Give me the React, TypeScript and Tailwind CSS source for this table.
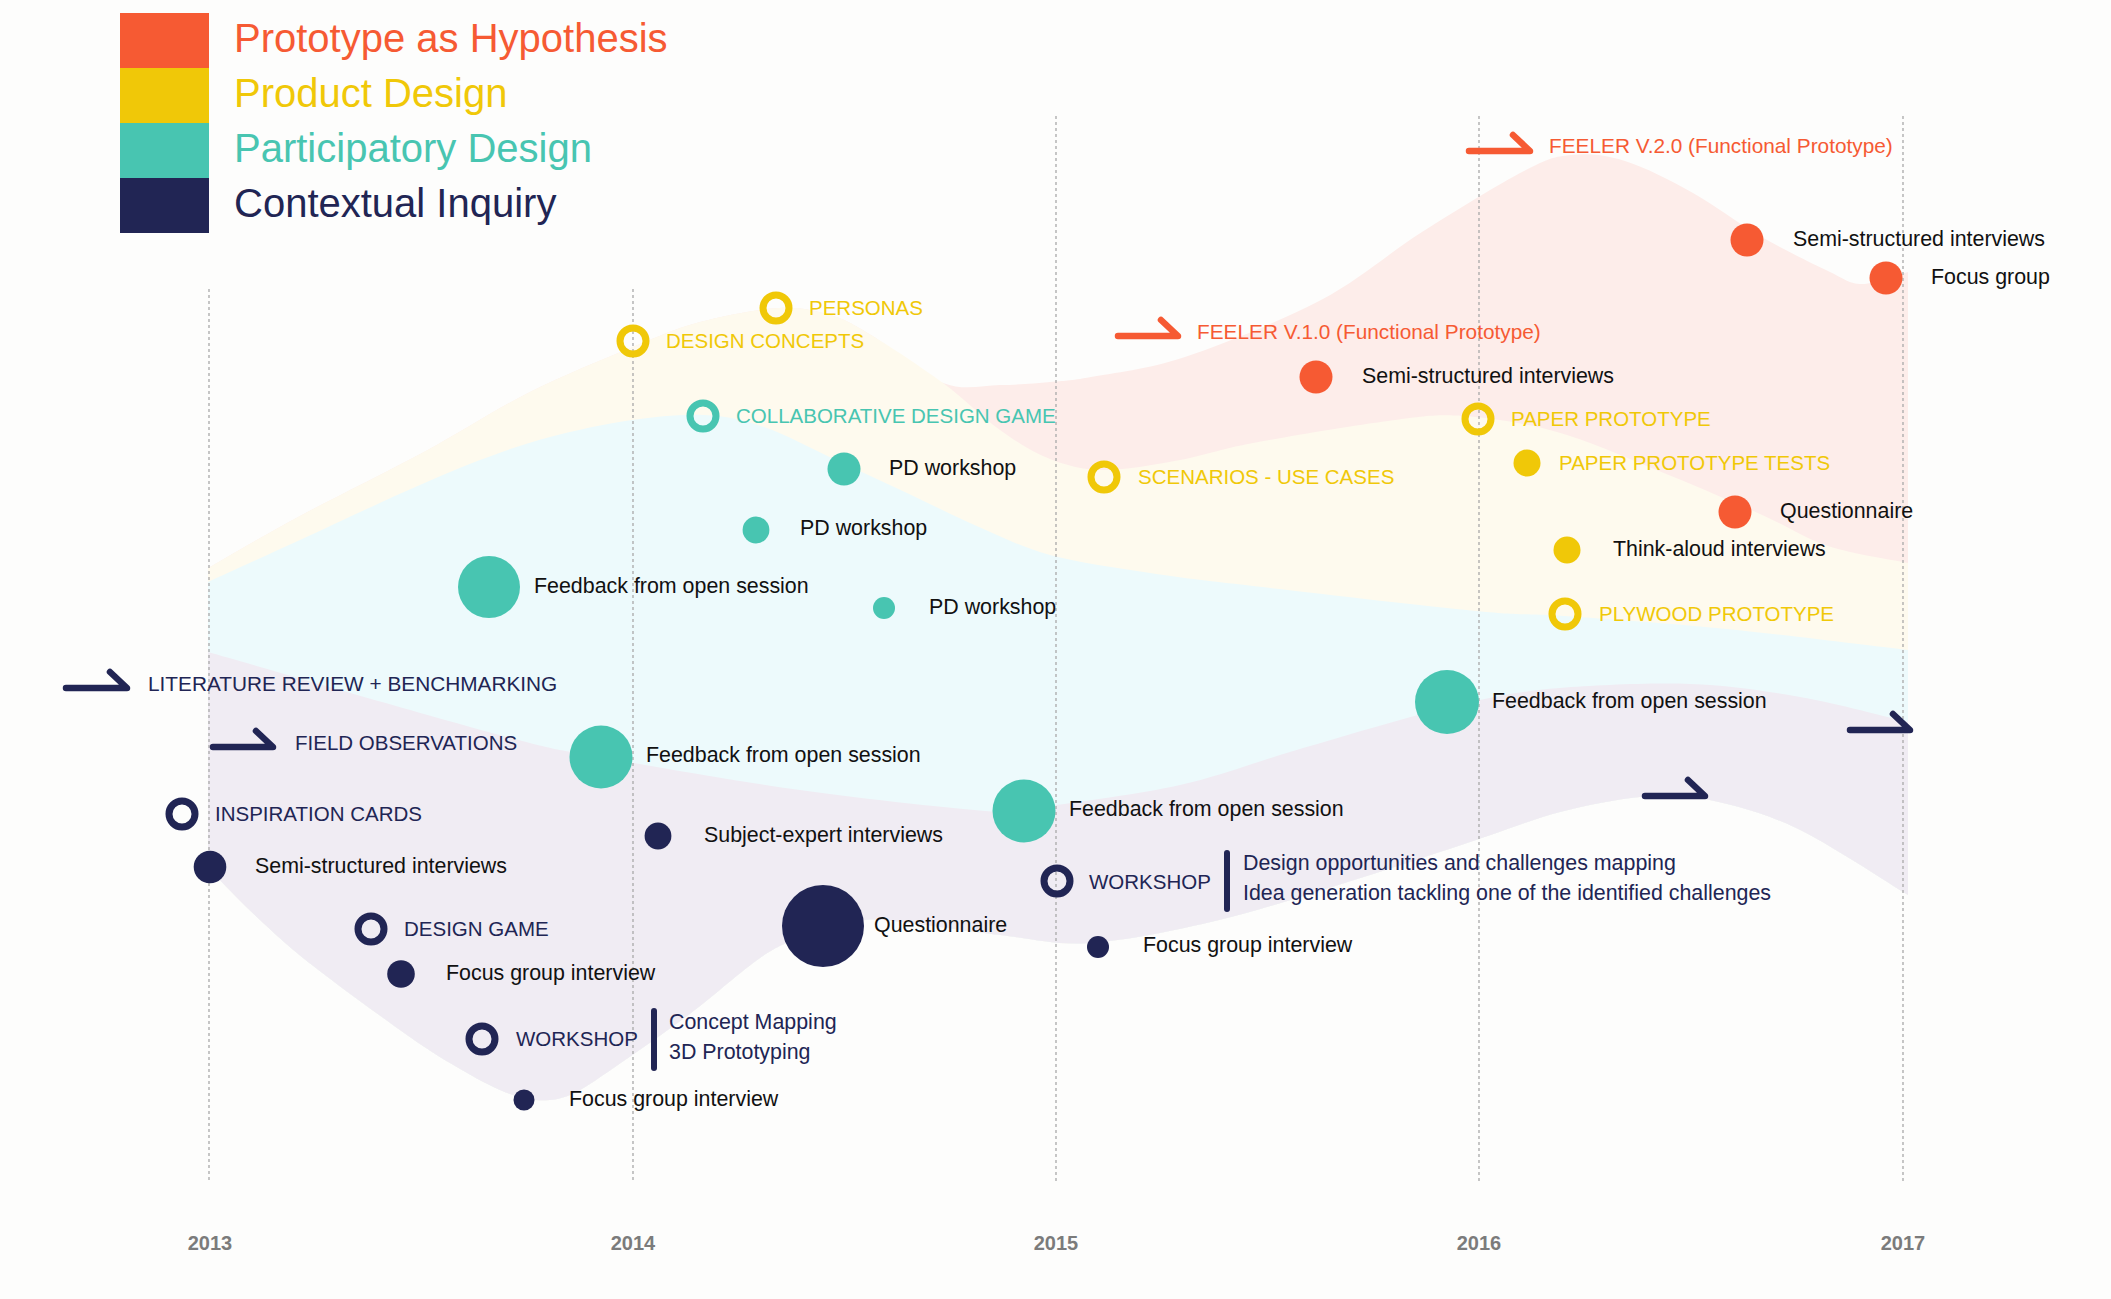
import React from "react";

const RED = "#f65a33";
const YELLOW = "#f0c808";
const TEAL = "#48c5b1";
const NAVY = "#212554";

type Pt = [number, number];

// catmull-rom -> cubic bezier, starting from the current point pts[0]
const smooth = (pts: Pt[]) => {
  let d = "";
  for (let i = 0; i < pts.length - 1; i++) {
    const p0 = pts[i - 1] || pts[i];
    const p1 = pts[i];
    const p2 = pts[i + 1];
    const p3 = pts[i + 2] || p2;
    const c1x = p1[0] + (p2[0] - p0[0]) / 6;
    const c1y = p1[1] + (p2[1] - p0[1]) / 6;
    const c2x = p2[0] - (p3[0] - p1[0]) / 6;
    const c2y = p2[1] - (p3[1] - p1[1]) / 6;
    d += ` C ${c1x} ${c1y} ${c2x} ${c2y} ${p2[0]} ${p2[1]}`;
  }
  return d;
};

const area = (top: Pt[], bottom: Pt[]) => {
  const rev = [...bottom].reverse();
  return `M ${top[0][0]} ${top[0][1]}${smooth(top)} L ${rev[0][0]} ${rev[0][1]}${smooth(rev)} Z`;
};

const yellowLeft: Pt[] = [
  [208, 568], [300, 516], [424, 452], [530, 392], [633, 347], [700, 322],
  [779, 308], [830, 315], [871, 335], [943, 383],
];
const redBottom: Pt[] = [
  [943, 383], [1000, 430], [1050, 459], [1104, 470], [1180, 460], [1253, 443],
  [1388, 421], [1463, 416], [1557, 432], [1659, 471], [1760, 514], [1828, 546], [1908, 563],
];
const redTop: Pt[] = [
  [943, 383], [1000, 385], [1050, 382], [1091, 377], [1185, 357], [1321, 300],
  [1422, 232], [1524, 171], [1571, 155], [1625, 161], [1693, 193], [1760, 236],
  [1828, 271], [1862, 284], [1908, 272],
];
const tealTop: Pt[] = [
  [208, 582], [300, 540], [404, 492], [480, 460], [550, 437], [632, 420], [704, 415],
  [764, 427], [836, 460], [907, 493], [979, 527], [1050, 555], [1150, 573],
  [1253, 586], [1476, 611], [1564, 616], [1727, 629], [1908, 650],
];
const navyTop: Pt[] = [
  [208, 652], [500, 735], [601, 757], [800, 790], [1000, 812], [1050, 806],
  [1180, 785], [1290, 752], [1400, 720], [1480, 700], [1560, 688], [1690, 684],
  [1800, 697], [1908, 722],
];
const navyBottom: Pt[] = [
  [208, 868], [260, 920], [312, 965], [400, 1030], [450, 1063], [500, 1090],
  [535, 1100], [570, 1095], [615, 1067], [691, 1013], [760, 958], [800, 938],
  [850, 925], [883, 920], [1000, 935], [1090, 943], [1219, 920], [1354, 880],
  [1476, 840], [1560, 812], [1640, 797], [1700, 798], [1794, 827], [1908, 895],
];

const dots: [number, number, number, string][] = [
  [1316, 377, 16.5, RED], [1747, 240, 16.5, RED], [1886, 278, 16.5, RED], [1735, 512, 16.5, RED],
  [1527, 463, 13.5, YELLOW], [1567, 550, 13.5, YELLOW],
  [844, 469, 16.5, TEAL], [756, 530, 13.4, TEAL], [884, 608, 11, TEAL],
  [489, 587, 31, TEAL], [601, 757, 31.5, TEAL], [1024, 811, 31.5, TEAL], [1447, 702, 32, TEAL],
  [210, 867, 16.3, NAVY], [401, 974, 13.8, NAVY], [524, 1100, 10.5, NAVY],
  [658, 836, 13.4, NAVY], [823, 926, 41, NAVY], [1098, 947, 11, NAVY],
];

const rings: [number, number, string][] = [
  [776, 308, YELLOW], [633, 341, YELLOW], [1104, 477, YELLOW], [1478, 419, YELLOW], [1565, 614, YELLOW],
  [703, 416, TEAL],
  [182, 814, NAVY], [371, 929, NAVY], [482, 1039, NAVY], [1057, 881, NAVY],
];

const arrows: [number, number, number, string][] = [
  [1469, 1530, 151, RED],
  [1118, 1178, 336, RED],
  [66, 127, 688, NAVY],
  [213, 273, 747, NAVY],
  [1645, 1705, 796, NAVY],
  [1850, 1910, 730, NAVY],
];

// caps = stage labels (slightly smaller), rest = activity labels
const labels: [string, string][] = [
  ["FEELER V.2.0 (Functional Prototype)", "left-[1549px] top-[146px] text-[#f65a33] text-[20.8px]"],
  ["FEELER V.1.0 (Functional Prototype)", "left-[1197px] top-[332px] text-[#f65a33] text-[20.8px]"],
  ["Semi-structured interviews", "left-[1793px] top-[240px] text-[#111111] text-[21.4px]"],
  ["Focus group", "left-[1931px] top-[278px] text-[#111111] text-[21.4px]"],
  ["Semi-structured interviews", "left-[1362px] top-[377px] text-[#111111] text-[21.4px]"],
  ["Questionnaire", "left-[1780px] top-[512px] text-[#111111] text-[21.4px]"],
  ["Think-aloud interviews", "left-[1613px] top-[550px] text-[#111111] text-[21.4px]"],
  ["PD workshop", "left-[889px] top-[469px] text-[#111111] text-[21.4px]"],
  ["PD workshop", "left-[800px] top-[529px] text-[#111111] text-[21.4px]"],
  ["PD workshop", "left-[929px] top-[608px] text-[#111111] text-[21.4px]"],
  ["Feedback from open session", "left-[534px] top-[587px] text-[#111111] text-[21.4px]"],
  ["Feedback from open session", "left-[646px] top-[756px] text-[#111111] text-[21.4px]"],
  ["Feedback from open session", "left-[1069px] top-[810px] text-[#111111] text-[21.4px]"],
  ["Feedback from open session", "left-[1492px] top-[702px] text-[#111111] text-[21.4px]"],
  ["Semi-structured interviews", "left-[255px] top-[867px] text-[#111111] text-[21.4px]"],
  ["Focus group interview", "left-[446px] top-[974px] text-[#111111] text-[21.4px]"],
  ["Focus group interview", "left-[569px] top-[1100px] text-[#111111] text-[21.4px]"],
  ["Subject-expert interviews", "left-[704px] top-[836px] text-[#111111] text-[21.4px]"],
  ["Questionnaire", "left-[874px] top-[926px] text-[#111111] text-[21.4px]"],
  ["Focus group interview", "left-[1143px] top-[946px] text-[#111111] text-[21.4px]"],
  ["PERSONAS", "left-[809px] top-[308px] text-[#f0c808] text-[20.5px]"],
  ["DESIGN CONCEPTS", "left-[666px] top-[341px] text-[#f0c808] text-[20.5px]"],
  ["SCENARIOS - USE CASES", "left-[1138px] top-[477px] text-[#f0c808] text-[20.5px]"],
  ["PAPER PROTOTYPE", "left-[1511px] top-[419px] text-[#f0c808] text-[20.5px]"],
  ["PAPER PROTOTYPE TESTS", "left-[1559px] top-[463px] text-[#f0c808] text-[20.5px]"],
  ["PLYWOOD PROTOTYPE", "left-[1599px] top-[614px] text-[#f0c808] text-[20.5px]"],
  ["COLLABORATIVE DESIGN GAME", "left-[736px] top-[416px] text-[#48c5b1] text-[20.5px]"],
  ["LITERATURE REVIEW + BENCHMARKING", "left-[148px] top-[684px] text-[#212554] text-[20.8px]"],
  ["FIELD OBSERVATIONS", "left-[295px] top-[743px] text-[#212554] text-[20.5px]"],
  ["INSPIRATION CARDS", "left-[215px] top-[814px] text-[#212554] text-[20.5px]"],
  ["DESIGN GAME", "left-[404px] top-[929px] text-[#212554] text-[20.5px]"],
  ["WORKSHOP", "left-[516px] top-[1039px] text-[#212554] text-[20.5px]"],
  ["Concept Mapping", "left-[669px] top-[1023px] text-[#212554] text-[21.4px]"],
  ["3D Prototyping", "left-[669px] top-[1053px] text-[#212554] text-[21.4px]"],
  ["WORKSHOP", "left-[1089px] top-[882px] text-[#212554] text-[20.5px]"],
  ["Design opportunities and challenges mapping", "left-[1243px] top-[864px] text-[#212554] text-[21.4px]"],
  ["Idea generation tackling one of the identified challenges", "left-[1243px] top-[894px] text-[#212554] text-[21.4px]"],
];

const years: [string, string][] = [
  ["2013", "left-[210px]"],
  ["2014", "left-[633px]"],
  ["2015", "left-[1056px]"],
  ["2016", "left-[1479px]"],
  ["2017", "left-[1903px]"],
];

const legend = [
  { name: "Prototype as Hypothesis", box: "bg-[#f65a33]", text: "text-[#f65a33]" },
  { name: "Product Design", box: "bg-[#f0c808]", text: "text-[#f0c808]" },
  { name: "Participatory Design", box: "bg-[#48c5b1]", text: "text-[#48c5b1]" },
  { name: "Contextual Inquiry", box: "bg-[#212554]", text: "text-[#212554]" },
];

const overallTop = [...yellowLeft, ...redTop.slice(1)];
const yellowTop = [...yellowLeft, ...redBottom.slice(1)];

export default function App() {
  return (
    <div className="relative w-[2111px] h-[1299px] overflow-hidden bg-[#fdfdfc] pl-[120px] pt-[13px] font-['Liberation_Sans',Arial,sans-serif]">
      <svg className="absolute inset-0" width={2111} height={1299} viewBox="0 0 2111 1299">
        <path d={area(overallTop, navyBottom)} fill="#fdedea" />
        <path d={area(yellowTop, navyBottom)} fill="#fefaee" />
        <path d={area(tealTop, navyBottom)} fill="#edfafc" />
        <path d={area(navyTop, navyBottom)} fill="#f0ecf3" />

        {[
          [209, 289],
          [633, 289],
          [1056, 116],
          [1479, 116],
          [1903, 116],
        ].map(([x, y0]) => (
          <line key={x} x1={x} y1={y0} x2={x} y2={1183} stroke="#a9a9a9" strokeWidth={1.3} strokeDasharray="3 3" />
        ))}

        {arrows.map(([x1, x2, y, c], i) => (
          <path
            key={i}
            d={`M ${x1} ${y} L ${x2} ${y} L ${x2 - 17} ${y - 16}`}
            fill="none"
            stroke={c}
            strokeWidth={6.5}
            strokeLinecap="round"
            strokeLinejoin="round"
          />
        ))}

        <line x1={654} y1={1011} x2={654} y2={1068} stroke={NAVY} strokeWidth={6} strokeLinecap="round" />
        <line x1={1227} y1={853} x2={1227} y2={909} stroke={NAVY} strokeWidth={6} strokeLinecap="round" />

        {dots.map(([cx, cy, r, c], i) => (
          <circle key={i} cx={cx} cy={cy} r={r} fill={c} />
        ))}
        {rings.map(([cx, cy, c], i) => (
          <circle key={i} cx={cx} cy={cy} r={13} fill="none" stroke={c} strokeWidth={7} />
        ))}
      </svg>

      <div className="relative flex flex-col">
        {legend.map((l) => (
          <div key={l.name} className="flex items-center h-[55px]">
            <div className={`w-[89px] h-[55px] ${l.box}`} />
            <span className={`ml-[25px] mb-[6px] text-[40px] leading-none whitespace-nowrap ${l.text}`}>{l.name}</span>
          </div>
        ))}
      </div>

      {labels.map(([t, pos], i) => (
        <span key={i} className={`absolute -translate-y-1/2 whitespace-nowrap leading-none ${pos}`}>
          {t}
        </span>
      ))}

      {years.map(([y, pos]) => (
        <span
          key={y}
          className={`absolute top-[1243px] -translate-x-1/2 -translate-y-1/2 text-[20px] font-bold leading-none text-[#7b7b7b] ${pos}`}
        >
          {y}
        </span>
      ))}
    </div>
  );
}
